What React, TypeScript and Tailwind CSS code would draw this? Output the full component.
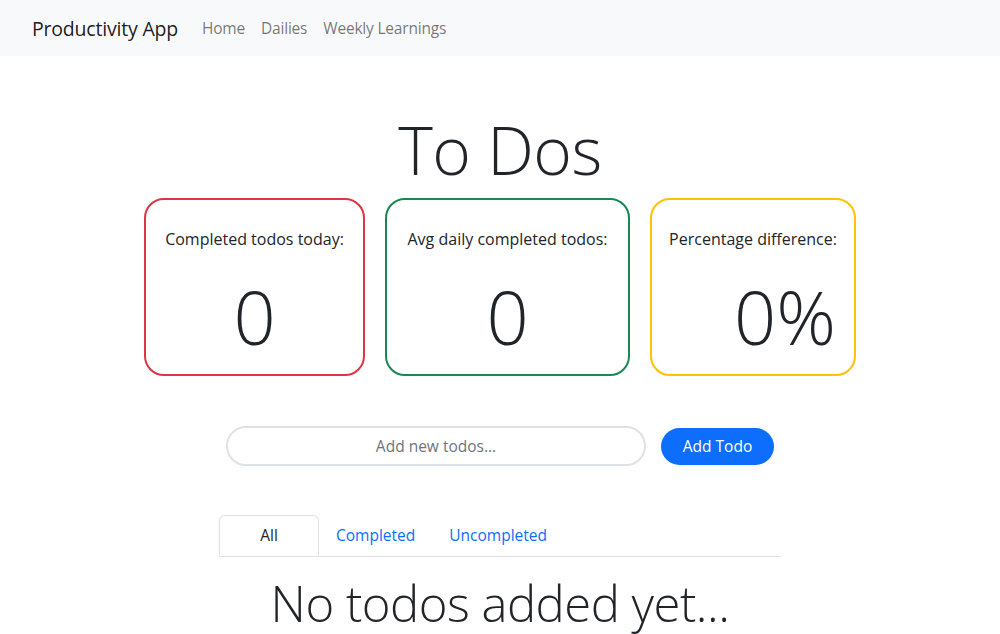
import React from 'react';

const font = { fontFamily: '"Open Sans", "Noto Sans", sans-serif' };

function StatCard({ label, value, color, width, alignEnd }: { label: string; value: string; color: string; width: string; alignEnd?: boolean }) {
  return (
    <div className={`${color} ${width} h-[178px] border-2 rounded-[20px] flex flex-col pt-[27px] px-3`}>
      <div className="text-[16px] leading-6 text-[#212529] text-center whitespace-nowrap">{label}</div>
      <div className={`mt-[22px] text-[74px] leading-[1.2] font-light text-[#212529] ${alignEnd ? 'text-right pr-[6px]' : 'text-center'}`}>
        {value}
      </div>
    </div>
  );
}

export default function App() {
  return (
    <div className="min-h-screen bg-white" style={font}>
      {/* Navbar */}
      <nav className="h-14 bg-[#f8f9fa] flex items-center pl-[32px] pt-px">
        <span className="text-[19.5px] text-black/90 mr-4 tracking-[-0.2px]">Productivity App</span>
        <div className="flex items-center text-[15.5px] text-black/55 tracking-[-0.2px]">
          <a className="px-2">Home</a>
          <a className="px-2">Dailies</a>
          <a className="px-2">Weekly Learnings</a>
        </div>
      </nav>

      <h1 className="text-center text-[66px] font-light leading-[1.2] text-[#212529] mt-[54px] tracking-[-0.5px]">To Dos</h1>

      {/* Stats */}
      <div className="flex justify-center gap-5 mt-[9px]">
        <StatCard label="Completed todos today:" value="0" color="border-[#dc3545]" width="w-[221px]" />
        <StatCard label="Avg daily completed todos:" value="0" color="border-[#198754]" width="w-[245px]" />
        <StatCard label="Percentage difference:" value="0%" color="border-[#ffc107]" width="w-[206px]" alignEnd />
      </div>

      {/* Add todo */}
      <div className="flex justify-center items-center gap-[15px] mt-[50px]">
        <input
          className="w-[420px] h-[40px] rounded-full border-2 border-[#dee2e6] text-center text-[15.5px] text-[#212529] placeholder:text-[#6c757d] outline-none"
          placeholder="Add new todos..."
        />
        <button className="w-[113px] h-[37px] rounded-full bg-[#0d6efd] text-white text-[15.5px]">Add Todo</button>
      </div>

      {/* Tabs */}
      <div className="w-[562px] mx-auto mt-[49px] flex border-b border-[#dee2e6] text-[15.5px]">
        <div className="w-[100px] h-[41px] -mb-px flex items-center justify-center border border-[#dee2e6] border-b-white rounded-t-md bg-white text-[#212529]">
          All
        </div>
        <a className="h-[41px] flex items-center px-[17px] text-[#0d6efd]">Completed</a>
        <a className="h-[41px] flex items-center px-[17px] text-[#0d6efd]">Uncompleted</a>
      </div>

      <h2 className="text-center text-[49px] font-light leading-[1.2] text-[#212529] mt-[17px] tracking-[-0.5px]">No todos added yet...</h2>
    </div>
  );
}
